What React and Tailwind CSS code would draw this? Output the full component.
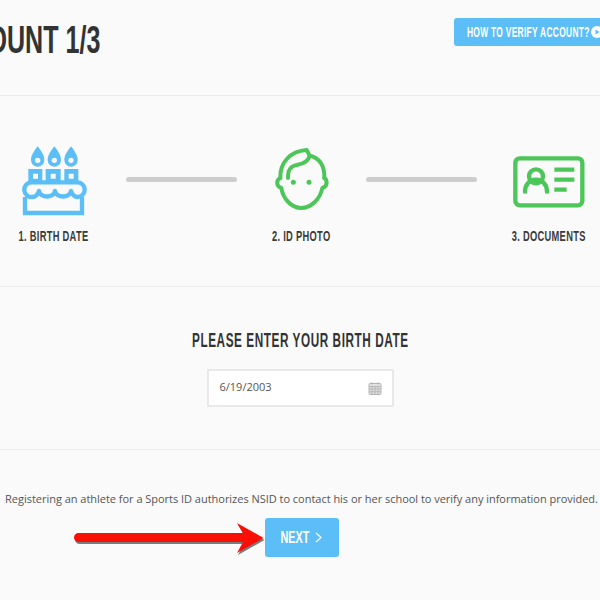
import React from "react";

// the reference uses a condensed display face, so Liberation Sans gets squeezed
const display = "font-['Liberation_Sans',sans-serif] font-bold uppercase whitespace-nowrap";

function CakeIcon() {
  return (
    <svg width="75" height="75" viewBox="0 0 225 225" fill="none" stroke="#5bbef7" strokeWidth="13" className="-ml-[1px]">
      {[68, 118, 168].map((x) => (
        <g key={x}>
          <path d={`M${x} 10c11 15 20 27 20 41a20 20 0 0 1-40 0c0-14 9-26 20-41z`} fill="#5bbef7" stroke="none" />
          <circle cx={x} cy="52" r="8" fill="#fafafa" stroke="none" />
        </g>
      ))}
      <path d="M40 78h42v36H40zM54 92v15h15V92z" fill="#5bbef7" fillRule="evenodd" stroke="none" />
      <path d="M92 78h45v36H92zM107 92v15h15V92z" fill="#5bbef7" fillRule="evenodd" stroke="none" />
      <path d="M148 78h42v36h-42zM161 92v15h15V92z" fill="#5bbef7" fillRule="evenodd" stroke="none" />
      <path d="M48 118h138a22 22 0 0 1 2 44c-10 0-16-7-20-18-4 22-44 22-48 0-4 22-44 22-48 0-4 11-10 18-20 18a22 22 0 0 1-4-44z" strokeLinejoin="round" />
      <path d="M30 162v48h171v-48" />
    </svg>
  );
}

function FaceIcon() {
  return (
    <svg width="75" height="75" viewBox="0 0 225 225" fill="none" stroke="#4cc659" strokeWidth="12" strokeLinecap="round" strokeLinejoin="round" className="ml-[3px]">
      <path d="M46 105C44 60 75 24 125 21l9 17c28 5 46 30 44 67" />
      <path d="M134 38c-4 16-18 24-36 27-20 3-30 14-29 40" />
      <path d="M46 105c-12 5-14 25 3 30 5 32 30 60 60 60s57-28 63-60c17-5 15-25 6-30" />
      <circle cx="85" cy="118" r="7.500" fill="#4cc659" stroke="none" />
      <circle cx="132" cy="118" r="7.500" fill="#4cc659" stroke="none" />
    </svg>
  );
}

function CardIcon() {
  return (
    <svg width="85" height="65" viewBox="0 0 255 195" fill="none" stroke="#4cc659" strokeWidth="13" className="mr-[3px]">
      <rect x="31" y="31" width="201" height="141" rx="13" />
      <circle cx="93" cy="85" r="21" />
      <path d="M60 131c0-22 14-36 33-36s33 14 33 36" strokeLinecap="round" />
      <path d="M148 65h60M148 95h60M148 125h37" />
    </svg>
  );
}

function CalendarIcon() {
  return (
    <svg width="14" height="14" viewBox="0 0 14 14" fill="#e4e4e4" stroke="#b4b4b4" strokeWidth="1">
      <rect x="1" y="2.500" width="12" height="11" rx="1" />
      <path d="M1 5.500h12M1 8h12M1 10.800h12M4 5.500v8M7 5.500v8M10 5.500v8M4 1v2.500M10 1v2.500" fill="none" />
    </svg>
  );
}

function RedArrow() {
  const d = "M8.500 18H173l-6-10 26.500 15L167 38l6-11H8.500a4.500 4.500 0 0 1 0-9z";
  return (
    <svg width="200" height="46" viewBox="0 0 200 46" className="absolute left-[70px] top-[515px]">
      <path d={d} fill="#444" opacity="0.7" transform="translate(1 2)" />
      <path d={d} fill="#f90f05" />
    </svg>
  );
}

function Step({ icon, label }) {
  return (
    <div className="flex w-[100px] flex-col items-center">
      <div className="flex h-[75px] items-center">{icon}</div>
      <div className={`${display} mt-[9px] scale-x-[0.62] text-[15px] leading-[18px] tracking-[0.5px] text-[#3a3a3a]`}>{label}</div>
    </div>
  );
}

function Connector({ className }) {
  return <div className={`mt-[34px] h-[5px] w-[111px] rounded-full bg-[#cdcdcd] ${className}`} />;
}

export default function App() {
  return (
    <div className="relative h-[600px] w-[600px] overflow-hidden bg-[#fafafa] font-['Open_Sans',sans-serif]">
      {/* header */}
      <div className="flex h-[96px] items-start justify-between border-b border-[#ececec]">
        <h1 className={`${display} -ml-[163px] mt-[18px] origin-left scale-x-[0.66] text-[38px] leading-[44px] text-[#333]`}>
          Verify Account 1/3
        </h1>
        <button className={`${display} mt-[18px] flex h-[28px] w-[146px] shrink-0 items-center rounded-l-[3px] bg-[#5bbef7] pl-[13px] text-[14px] text-white`}>
          <span className="block w-[124px] shrink-0 origin-left scale-x-[0.6] text-left tracking-[0.5px]">How to verify account?</span>
          <svg width="12" height="12" viewBox="0 0 12 12" className="shrink-0">
            <circle cx="6" cy="6" r="6" fill="#fff" />
            <path d="M4.500 3.500L8.500 6l-4 2.500z" fill="#5bbef7" />
          </svg>
        </button>
      </div>

      {/* steps */}
      <div className="flex h-[191px] items-start border-b border-[#ececec] pl-[3px] pt-[47px]">
        <Step icon={<CakeIcon />} label="1. Birth Date" />
        <Connector className="ml-[23px] mr-[14px]" />
        <Step icon={<FaceIcon />} label="2. ID Photo" />
        <Connector className="ml-[15px] mr-[22px]" />
        <Step icon={<CardIcon />} label="3. Documents" />
      </div>

      {/* birth date */}
      <div className="flex h-[163px] flex-col items-center border-b border-[#ececec] pt-[40px]">
        <h2 className={`${display} scale-x-[0.56] text-[21px] leading-[26px] tracking-[1px] text-[#333]`}>Please enter your birth date</h2>
        <div className="mt-[16px] flex h-[38px] w-[187px] items-center justify-between border-2 border-[#e9e9e9] bg-white pl-[11px] pr-[10px] text-[11px] text-[#555]">
          <span className="mb-[2px]">6/19/2003</span>
          <CalendarIcon />
        </div>
      </div>

      {/* footer */}
      <div className="flex flex-col items-center pl-[3px] pt-[41px]">
        <p className="whitespace-nowrap text-[11px] leading-[16px] tracking-[-0.025px] text-[#555]">
          Registering an athlete for a Sports ID authorizes NSID to contact his or her school to verify any information provided.
        </p>
        <button className={`${display} mt-[11px] flex h-[39px] w-[74px] items-center justify-center gap-[3px] rounded-[3px] bg-[#5bbef7] pr-[3px] text-white`}>
          <span className="-mx-[5px] block scale-x-[0.66] text-[16.500px]">Next</span>
          <svg width="7" height="11" viewBox="0 0 7 11" fill="none" stroke="#fff" strokeWidth="1.200"><path d="M1 1l5 4.500L1 10" /></svg>
        </button>
      </div>

      <RedArrow />
    </div>
  );
}
